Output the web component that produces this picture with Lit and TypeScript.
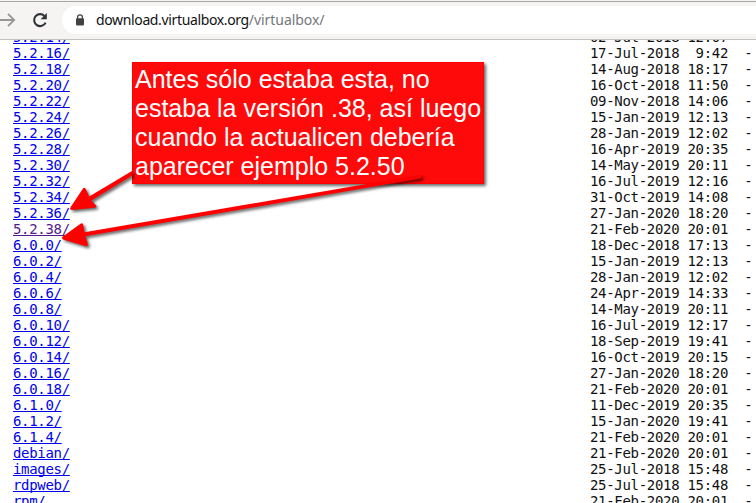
import { LitElement, html, css } from "lit";
import { customElement } from "lit/decorators.js";

interface Entry { name: string; date: string; visited?: boolean }

const entries: Entry[] = `5.2.14/|02-Jul-2018 12:07
5.2.16/|17-Jul-2018  9:42
5.2.18/|14-Aug-2018 18:17
5.2.20/|16-Oct-2018 11:50
5.2.22/|09-Nov-2018 14:06
5.2.24/|15-Jan-2019 12:13
5.2.26/|28-Jan-2019 12:02
5.2.28/|16-Apr-2019 20:35
5.2.30/|14-May-2019 20:11
5.2.32/|16-Jul-2019 12:16
5.2.34/|31-Oct-2019 14:08
5.2.36/|27-Jan-2020 18:20
5.2.38/|21-Feb-2020 20:01
6.0.0/|18-Dec-2018 17:13
6.0.2/|15-Jan-2019 12:13
6.0.4/|28-Jan-2019 12:02
6.0.6/|24-Apr-2019 14:33
6.0.8/|14-May-2019 20:11
6.0.10/|16-Jul-2019 12:17
6.0.12/|18-Sep-2019 19:41
6.0.14/|16-Oct-2019 20:15
6.0.16/|27-Jan-2020 18:20
6.0.18/|21-Feb-2020 20:01
6.1.0/|11-Dec-2019 20:35
6.1.2/|15-Jan-2020 19:41
6.1.4/|21-Feb-2020 20:01
debian/|21-Feb-2020 20:01
images/|25-Jul-2018 15:48
rdpweb/|25-Jul-2018 15:48
rpm/|21-Feb-2020 20:01`.split("\n").map((line) => {
  const [name, date] = line.split("|");
  return { name, date, visited: name === "5.2.38/" };
});

@customElement("browser-bar")
class BrowserBar extends LitElement {
  static styles = css`
    :host {
      display: flex;
      align-items: center;
      box-sizing: border-box;
      height: 40px;
      border-top: 1px solid #f5f4f2;
      border-bottom: 1px solid #c4c2c0;
      background: #f5f4f2;
      box-shadow: inset 0 1px #a9a6a3;
    }
    svg { flex: none; display: block; }
    .forward { width: 16px; height: 16px; }
    .reload { width: 16px; height: 16px; margin-left: 16px; }
    .address {
      flex: 1;
      display: flex;
      align-items: center;
      height: 28px;
      margin-left: 14px;
      padding-left: 13px;
      border-radius: 14px 0 0 14px;
      background: #fff;
    }
    .lock { width: 10px; height: 12px; }
    .url {
      margin-left: 11px;
      font: 14px/20px "Noto Sans", sans-serif;
      color: #101214;
      white-space: nowrap;
      letter-spacing: -0.36px;
    }
    .path { color: #74777b; letter-spacing: -0.06px; }
  `;
  render() {
    return html`
      <svg class="forward" viewBox="0 0 16 16" fill="none" stroke="#969696" stroke-width="1.8">
        <path d="M0 8H14M8 1.8L14.2 8L8 14.2" />
      </svg>
      <svg class="reload" viewBox="0 0 16 16">
        <path d="M13.6 10.6A6 6 0 1 1 12.4 3.9" fill="none" stroke="#2f3337" stroke-width="2.1" />
        <path d="M14.8 1V7.2H8.6Z" fill="#2f3337" />
      </svg>
      <div class="address">
        <svg class="lock" viewBox="0 0 10 12">
          <path d="M2.6 5V3.2a2.4 2.4 0 0 1 4.8 0V5" fill="none" stroke="#424242" stroke-width="1.3" />
          <rect x="1" y="4.2" width="8" height="7.3" rx="1" fill="#424242" />
        </svg>
        <span class="url">download.virtualbox.org<span class="path">/virtualbox/</span></span>
      </div>
    `;
  }
}

@customElement("app-root")
class AppRoot extends LitElement {
  static styles = css`
    :host {
      display: flex;
      flex-direction: column;
      position: relative;
      height: 503px;
      overflow: hidden;
      background: #fff;
    }
    browser-bar { flex: none; }
    .viewport { flex: 1; min-height: 0; overflow: hidden; }
    .listing {
      margin: -11px 0 0;
      padding-left: 13px;
      font: 14px/16px "DejaVu Sans Mono", monospace;
      letter-spacing: -0.31px;
      color: #111;
    }
    .row { display: flex; height: 16px; white-space: pre; }
    .name { flex: 0 0 577px; }
    .link {
      color: #0000ee;
      text-decoration: underline;
      text-decoration-thickness: 1px;
      text-decoration-skip-ink: none;
      text-underline-offset: 1px;
    }
    .visited { color: #551a8b; }
    .note {
      position: absolute;
      left: 132px;
      top: 62px;
      box-sizing: border-box;
      width: 352px;
      height: 122px;
      padding: 2px 0 0 2px;
      border: 1px solid #ff0000;
      background: #ff0a0a;
      box-shadow: 2px 2px 3px rgba(0, 0, 0, 0.6);
      color: #fff;
      font: 25px/29px "Liberation Sans", Arial, sans-serif;
      white-space: nowrap;
    }
    .arrows {
      position: absolute;
      inset: 0;
      width: 756px;
      height: 503px;
      filter: drop-shadow(2px 2px 1.5px rgba(0, 0, 0, 0.6));
    }
  `;
  render() {
    return html`
      <browser-bar></browser-bar>
      <div class="viewport">
        <div class="listing">
          ${entries.map((e) => html`<div class="row"><span class="name"><a class="link ${e.visited ? "visited" : ""}">${e.name}</a></span><span>${e.date}  -</span></div>`)}
        </div>
      </div>
      <div class="note">Antes sólo estaba esta, no<br />estaba la versión .38, así luego<br />cuando la actualicen debería<br />aparecer ejemplo 5.2.50</div>
      <svg class="arrows" viewBox="0 0 756 503" fill="#ff0000">
        <path d="M70.3 209.5Q69.5 208.5 71 206.5L83 188.5Q85 186.8 86 189.5L89.2 196.6L132 171V175.8L91.3 200.4L96 205.5Q97 207.5 94.5 207.8L72 209.9Z" />
        <path d="M62 238Q61.5 237 63.5 236L80.5 223.7Q83 222.3 83.3 225L84.5 232.3L420.5 174.8Q422.5 176.5 420.5 178.6L85.3 236.3L87.9 244Q88 247 85 246L63 239.4Z" />
      </svg>
    `;
  }
}
